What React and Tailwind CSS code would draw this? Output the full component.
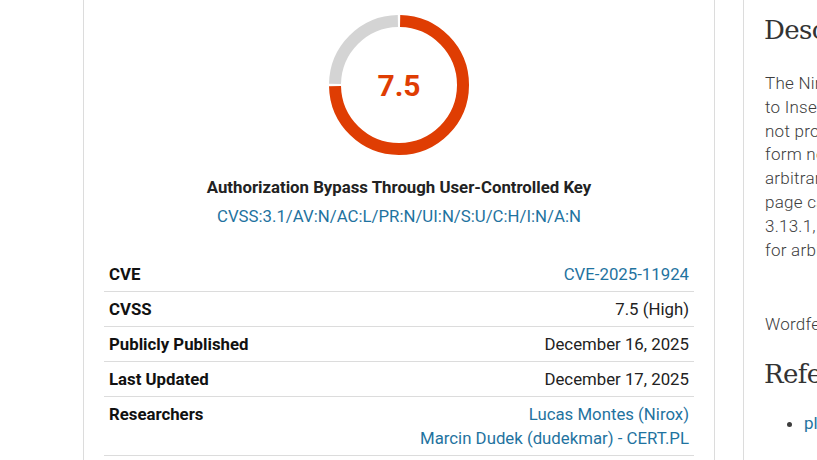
import React from 'react';

const rows = [
    { label: 'CVE', value: ['CVE-2025-11924'], link: true },
    { label: 'CVSS', value: ['7.5 (High)'] },
    { label: 'Publicly Published', value: ['December 16, 2025'] },
    { label: 'Last Updated', value: ['December 17, 2025'] },
    { label: 'Researchers', value: ['Lucas Montes (Nirox)', 'Marcin Dudek (dudekmar) - CERT.PL'], link: true },
];

const ScoreDonut = () => (
    <div className="relative w-[140px] h-[140px]">
        <svg width="140" height="140" viewBox="0 0 140 140">
            {/* red: 75% of the ring, clockwise from the top */}
            <path
                d="M 71.117 6.0096 A 64 64 0 1 1 6.0096 71.117"
                fill="none"
                stroke="#df3d03"
                strokeWidth="12"
            />
            <path
                d="M 6.0096 68.883 A 64 64 0 0 1 68.883 6.0096"
                fill="none"
                stroke="#d4d4d4"
                strokeWidth="12"
            />
        </svg>
        <div className="absolute inset-0 flex items-center justify-center text-[30px] font-bold text-[#df3d03]">
            7.5
        </div>
    </div>
);

const App = () => {
    return (
        <div className="flex h-[460px] overflow-hidden bg-white font-['Roboto',sans-serif] text-[#222]">
            <div className="w-[83px] shrink-0" />

            {/* Vulnerability card */}
            <div className="w-[632px] shrink-0 border-x border-[#dcdcdc] px-5 pt-[15px]">
                <div className="flex justify-center">
                    <ScoreDonut />
                </div>
                <div className="mt-[20px] text-center text-[16.8px] leading-6 font-bold text-[#222]">
                    Authorization Bypass Through User-Controlled Key
                </div>
                <div className="mt-[5px] text-center text-[16.8px] leading-6">
                    <a href="#" className="text-[#1f73a0]">CVSS:3.1/AV:N/AC:L/PR:N/UI:N/S:U/C:H/I:N/A:N</a>
                </div>

                <table className="mt-[29px] w-full border-collapse text-[16.8px] leading-6">
                    <tbody>
                        {rows.map((row) => (
                            <tr key={row.label} className="border-b border-[#dcdcdc]">
                                <td className="p-[5px] align-top font-bold text-[#111]">{row.label}</td>
                                <td className="p-[5px] text-right align-top">
                                    {row.value.map((v) => (
                                        <div key={v}>
                                            {row.link ? <a href="#" className="text-[#1f73a0]">{v}</a> : v}
                                        </div>
                                    ))}
                                </td>
                            </tr>
                        ))}
                    </tbody>
                </table>
            </div>

            <div className="w-[28px] shrink-0" />

            {/* Description column */}
            <div className="flex-1 min-w-0 border-l border-[#dcdcdc] pl-[20px] pt-[13px] whitespace-nowrap overflow-hidden text-[#3d3d3d]">
                <h2 className="font-['DejaVu_Serif',serif] text-[26px] leading-[34px] tracking-[-0.6px] text-[#333]">Description</h2>
                <div className="pl-px text-[17px] font-light tracking-[0.25px]">
                    <p className="mt-[25px] leading-[23.8px]">
                        The Ninja Forms – The Contact Form Builder That Grows With You plugin for WordPress is vulnerable<br />
                        to Insecure Direct Object Reference in all versions up to, and including, 3.13.1 due to the plugin<br />
                        not properly verifying that a user is authorized to access a submission's data. This makes it possible<br />
                        form notifications and submissions to be viewed by attackers who can read<br />
                        arbitrary submissions, including those belonging to forms they should<br />
                        page can be reached by unauthenticated attackers on sites running version<br />
                        3.13.1, which allows access to submitted form data and can be leveraged<br />
                        for arbitrary form entry disclosure.
                    </p>
                    <p className="mt-[50px] leading-6">Wordfence would like to thank the researchers for their work.</p>
                </div>
                <h2 className="mt-[21px] font-['DejaVu_Serif',serif] text-[26px] leading-[34px] tracking-[-0.6px] text-[#333]">References</h2>
                <ul className="mt-[20px] list-disc pl-10 text-[17px] leading-6">
                    <li><a href="#" className="text-[#1f73a0]">plugins.trac.wordpress.org</a></li>
                </ul>
            </div>
        </div>
    );
};

export default App;
